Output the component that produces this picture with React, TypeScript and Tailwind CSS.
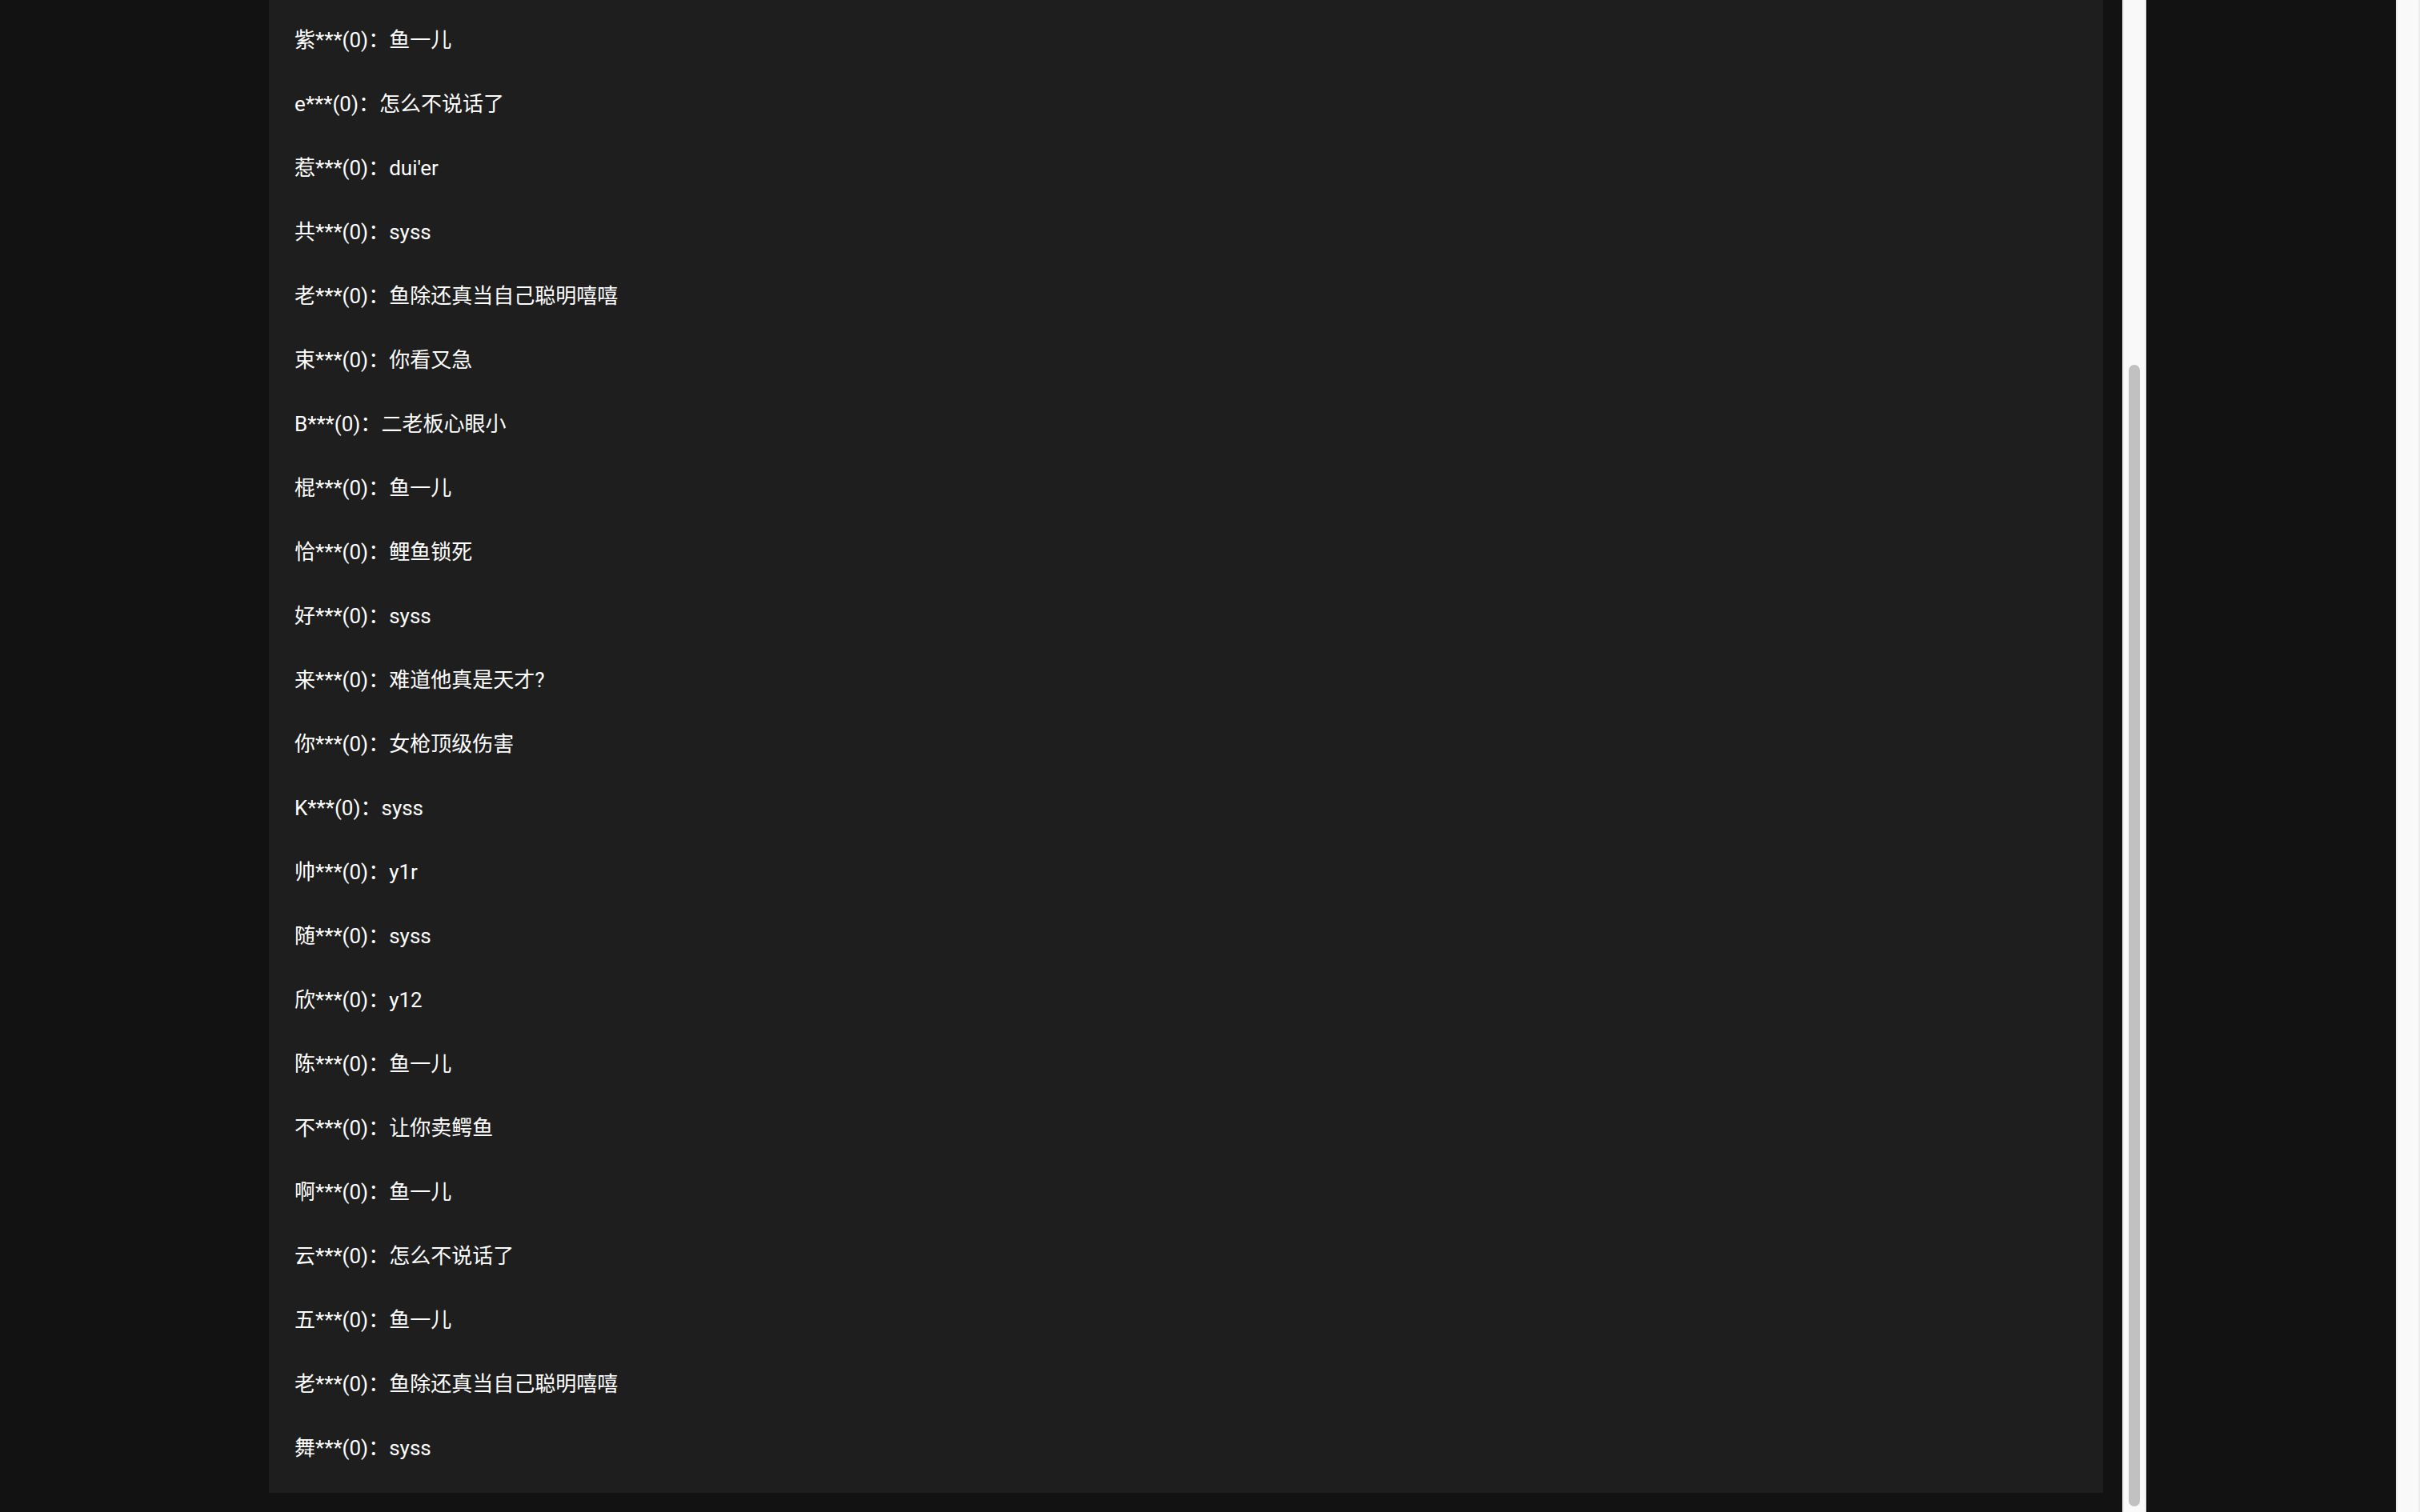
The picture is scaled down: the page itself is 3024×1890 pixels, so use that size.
const messages: [string, string][] = [
  ['紫***(0)', '鱼一儿'],
  ['e***(0)', '怎么不说话了'],
  ['惹***(0)', "dui'er"],
  ['共***(0)', 'syss'],
  ['老***(0)', '鱼除还真当自己聪明嘻嘻'],
  ['束***(0)', '你看又急'],
  ['B***(0)', '二老板心眼小'],
  ['棍***(0)', '鱼一儿'],
  ['恰***(0)', '鲤鱼锁死'],
  ['好***(0)', 'syss'],
  ['来***(0)', '难道他真是天才?'],
  ['你***(0)', '女枪顶级伤害'],
  ['K***(0)', 'syss'],
  ['帅***(0)', 'y1r'],
  ['随***(0)', 'syss'],
  ['欣***(0)', 'y12'],
  ['陈***(0)', '鱼一儿'],
  ['不***(0)', '让你卖鳄鱼'],
  ['啊***(0)', '鱼一儿'],
  ['云***(0)', '怎么不说话了'],
  ['五***(0)', '鱼一儿'],
  ['老***(0)', '鱼除还真当自己聪明嘻嘻'],
  ['舞***(0)', 'syss'],
];

function Scrollbar({ thumb }: { thumb?: boolean }) {
  return (
    <div className="flex w-[30px] shrink-0 flex-col border-x-2 border-[#ececec] bg-[#f9f9f9] px-[6px] pt-[456px] pb-[7px]">
      {thumb && <div className="flex-1 rounded-full bg-[#c1c1c1]" />}
    </div>
  );
}

export default function App() {
  return (
    <div className="flex h-[1890px] w-full overflow-hidden bg-[#121212] font-['Roboto','Noto_Sans_CJK_SC',sans-serif]">
      <div className="w-[336px] shrink-0" />
      <div className="w-[2292px] shrink-0 self-start bg-[#1e1e1e] px-[32px] pt-[10px] pb-[16px]">
        {messages.map(([user, text], i) => (
          <div key={i} className="flex h-[80px] items-center text-[26px] leading-[40px] text-white">
            <span>{user}</span>
            <span>：</span>
            <span>{text}</span>
          </div>
        ))}
      </div>
      <div className="w-[24px] shrink-0" />
      <Scrollbar thumb />
      <div className="flex-1" />
      <Scrollbar />
    </div>
  );
}
